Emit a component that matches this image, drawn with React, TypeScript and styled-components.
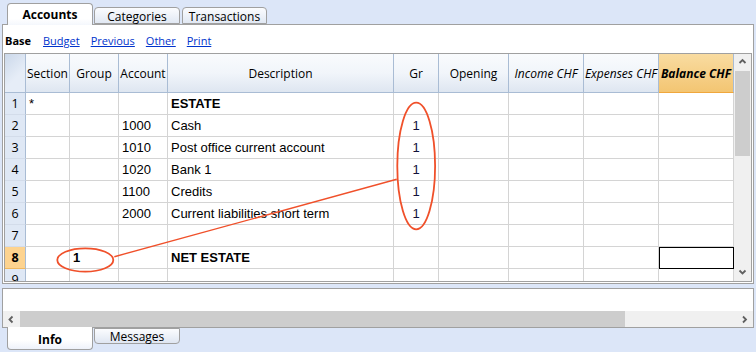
import React from 'react';
import styled, { createGlobalStyle } from 'styled-components';

const GlobalStyle = createGlobalStyle`
  html, body { margin: 0; padding: 0; }
  body { background: #dce6f8; }
`;

const UI_FONT = `'Open Sans', 'Noto Sans', sans-serif`;
const CELL_FONT = `'Liberation Sans', Arial, sans-serif`;

const COLS = [21, 44, 49, 49, 226, 45, 70, 75, 75, 75];
const TEMPLATE = COLS.map((c) => `${c}px`).join(' ');

const Page = styled.div`
  position: relative;
  width: 756px;
  height: 352px;
  overflow: hidden;
  background: #dce6f8;
  font-family: ${UI_FONT};
  color: #000;
`;

const TabRow = styled.div`
  display: flex;
  align-items: flex-end;
  height: 24px;
  padding-left: 7px;
  gap: 1px;
`;

const TopTab = styled.div<{ $active?: boolean; $width: number }>`
  position: relative;
  z-index: 2;
  box-sizing: border-box;
  width: ${({ $width }) => $width}px;
  height: ${({ $active }) => ($active ? 22 : 17)}px;
  margin-bottom: ${({ $active }) => ($active ? -1 : 0)}px;
  border: 1px solid #a0a0a0;
  border-bottom: ${({ $active }) => ($active ? 'none' : '1px solid #a0a0a0')};
  border-radius: 4px 4px 0 0;
  background: ${({ $active }) =>
    $active
      ? 'linear-gradient(#ffffff, #ffffff 70%, #f4f7fc)'
      : 'linear-gradient(#fbfcfe, #e1e8f3)'};
  display: flex;
  align-items: center;
  justify-content: center;
  font-size: 12px;
  font-weight: ${({ $active }) => ($active ? 700 : 400)};
  padding-top: ${({ $active }) => ($active ? 0 : 1)}px;
`;

const Panel = styled.div`
  position: relative;
  z-index: 1;
  box-sizing: border-box;
  margin-left: 2px;
  width: 752px;
  height: 260px;
  border: 1px solid #a0a0a0;
  background: #fff;
  padding: 0 1px 1px 1px;
  display: flex;
  flex-direction: column;
`;

const LinkBar = styled.div`
  height: 28px;
  box-sizing: border-box;
  padding: 3px 0 0 1px;
  display: flex;
  align-items: center;
  gap: 11px;
  font-size: 11px;
`;

const ViewName = styled.span`
  font-weight: 700;
  margin-right: 1px;
`;

const ViewLink = styled.a`
  color: #0033cc;
  text-decoration: underline;
  cursor: pointer;
`;

const GridBox = styled.div`
  flex: 1;
  min-height: 0;
  border: 1px solid #a0a0a0;
  display: flex;
  overflow: hidden;
`;

const Table = styled.div`
  width: 729px;
  overflow: hidden;
`;

const Row = styled.div<{ $header?: boolean }>`
  display: grid;
  grid-template-columns: ${TEMPLATE};
  height: ${({ $header }) => ($header ? 39 : 22)}px;
`;

const HeadCell = styled.div<{ $italic?: boolean; $hot?: boolean; $corner?: boolean }>`
  box-sizing: border-box;
  border-right: 1px solid #a9bcd4;
  border-bottom: 1px solid ${({ $hot }) => ($hot ? '#f0a73c' : '#a9bcd4')};
  background: ${({ $hot, $corner }) =>
    $hot
      ? 'linear-gradient(#f9dca1, #f3c572)'
      : $corner
      ? 'linear-gradient(135deg, #cbd8ea, #e6edf7 60%)'
      : 'linear-gradient(#f9fbfd, #f1f5fa 50%, #dee6f1)'};
  display: flex;
  align-items: center;
  justify-content: center;
  font-size: 12px;
  font-style: ${({ $italic, $hot }) => ($italic || $hot ? 'italic' : 'normal')};
  font-weight: ${({ $hot }) => ($hot ? 700 : 400)};
  white-space: nowrap;
  overflow: hidden;
`;

const NumCell = styled.div<{ $current?: boolean }>`
  box-sizing: border-box;
  border-right: 1px solid #a9bcd4;
  border-bottom: 1px solid ${({ $current }) => ($current ? '#f0b860' : '#d3dcea')};
  background: ${({ $current }) => ($current ? '#fdd38f' : '#dfe8f5')};
  display: flex;
  align-items: center;
  justify-content: center;
  font-size: 12.5px;
  font-weight: ${({ $current }) => ($current ? 700 : 400)};
`;

const Cell = styled.div<{ $bold?: boolean; $center?: boolean; $gr?: boolean; $selected?: boolean }>`
  box-sizing: border-box;
  border-right: 1px solid #d4d4d4;
  border-bottom: 1px solid #d4d4d4;
  padding: 0 3px;
  display: flex;
  align-items: center;
  justify-content: ${({ $center }) => ($center ? 'center' : 'flex-start')};
  font-family: ${CELL_FONT};
  font-size: 13px;
  font-weight: ${({ $bold }) => ($bold ? 700 : 400)};
  color: ${({ $gr }) => ($gr ? '#12123a' : '#000')};
  white-space: nowrap;
  overflow: hidden;
  outline: ${({ $selected }) => ($selected ? '1px solid #000' : 'none')};
  outline-offset: -1px;
`;

const VScroll = styled.div`
  width: 17px;
  background: #f0f0f0;
  display: flex;
  flex-direction: column;
`;

const ArrowButton = styled.div<{ $w?: number; $h?: number }>`
  width: ${({ $w }) => $w ?? 17}px;
  height: ${({ $h }) => $h ?? 17}px;
  flex-shrink: 0;
  display: flex;
  align-items: center;
  justify-content: center;
  background: #f0f0f0;
`;

const VThumb = styled.div`
  height: 85px;
  margin: 0 1px;
  background: #cdcdcd;
`;

const Spacer = styled.div`
  flex: 1;
`;

const InfoPanel = styled.div`
  position: relative;
  z-index: 1;
  box-sizing: border-box;
  margin: 4px 0 0 2px;
  width: 752px;
  height: 40px;
  border: 1px solid #a0a0a0;
  background: #fff;
  display: flex;
  flex-direction: column;
  justify-content: flex-end;
`;

const HScroll = styled.div`
  height: 16px;
  display: flex;
  background: #f0f0f0;
`;

const HThumb = styled.div`
  width: 605px;
  background: #cdcdcd;
`;

const BottomTabRow = styled.div`
  display: flex;
  align-items: flex-start;
  padding-left: 7px;
  gap: 1px;
`;

const BottomTab = styled.div<{ $active?: boolean; $width: number }>`
  position: relative;
  z-index: 2;
  box-sizing: border-box;
  width: ${({ $width }) => $width}px;
  height: ${({ $active }) => ($active ? 23 : 16)}px;
  margin-top: ${({ $active }) => ($active ? -1 : 0)}px;
  border: 1px solid #a0a0a0;
  border-top: ${({ $active }) => ($active ? 'none' : '1px solid #a0a0a0')};
  border-radius: 0 0 4px 4px;
  background: ${({ $active }) =>
    $active ? 'linear-gradient(#ffffff, #ffffff 60%, #eef2fa)' : 'linear-gradient(#fbfcfe, #dfe6f2)'};
  display: flex;
  align-items: center;
  justify-content: center;
  font-size: 12px;
  font-weight: ${({ $active }) => ($active ? 700 : 400)};
  padding-top: ${({ $active }) => ($active ? 2 : 0)}px;
`;

const Overlay = styled.svg`
  position: absolute;
  left: 0;
  top: 0;
  z-index: 5;
  pointer-events: none;
`;

const Chevron = ({ dir }: { dir: 'up' | 'down' | 'left' | 'right' }) => {
  const paths = {
    up: 'M1.5 5 L4.5 2 L7.5 5',
    down: 'M1.5 2.5 L4.5 5.5 L7.5 2.5',
    left: 'M5.5 1.5 L2.5 4.5 L5.5 7.5',
    right: 'M3 1.5 L6 4.5 L3 7.5',
  };
  return (
    <svg width="9" height="9" viewBox="0 0 9 9">
      <path d={paths[dir]} fill="none" stroke="#606060" strokeWidth="1.8" />
    </svg>
  );
};

interface AccountRow {
  n: number;
  section?: string;
  group?: string;
  account?: string;
  desc?: string;
  gr?: string;
  bold?: boolean;
  current?: boolean;
}

const rows: AccountRow[] = [
  { n: 1, section: '*', desc: 'ESTATE', bold: true },
  { n: 2, account: '1000', desc: 'Cash', gr: '1' },
  { n: 3, account: '1010', desc: 'Post office current account', gr: '1' },
  { n: 4, account: '1020', desc: 'Bank 1', gr: '1' },
  { n: 5, account: '1100', desc: 'Credits', gr: '1' },
  { n: 6, account: '2000', desc: 'Current liabilities short term', gr: '1' },
  { n: 7 },
  { n: 8, group: '1', desc: 'NET ESTATE', bold: true, current: true },
  { n: 9 },
];

const headers = [
  { label: 'Section' },
  { label: 'Group' },
  { label: 'Account' },
  { label: 'Description' },
  { label: 'Gr' },
  { label: 'Opening' },
  { label: 'Income CHF', italic: true },
  { label: 'Expenses CHF', italic: true },
  { label: 'Balance CHF', hot: true },
];

const App: React.FC = () => {
  return (
    <Page>
      <GlobalStyle />
      <TabRow>
        <TopTab $active $width={86}>Accounts</TopTab>
        <TopTab $width={86}>Categories</TopTab>
        <TopTab $width={85} style={{ marginLeft: 1 }}>Transactions</TopTab>
      </TabRow>

      <Panel>
        <LinkBar>
          <ViewName>Base</ViewName>
          <ViewLink>Budget</ViewLink>
          <ViewLink>Previous</ViewLink>
          <ViewLink>Other</ViewLink>
          <ViewLink>Print</ViewLink>
        </LinkBar>

        <GridBox>
          <Table>
            <Row $header>
              <HeadCell $corner />
              {headers.map((h) => (
                <HeadCell key={h.label} $italic={h.italic} $hot={h.hot}>
                  {h.label}
                </HeadCell>
              ))}
            </Row>
            {rows.map((r) => (
              <Row key={r.n}>
                <NumCell $current={r.current}>{r.n}</NumCell>
                <Cell>{r.section}</Cell>
                <Cell $bold>{r.group}</Cell>
                <Cell>{r.account}</Cell>
                <Cell $bold={r.bold}>{r.desc}</Cell>
                <Cell $center $gr>{r.gr}</Cell>
                <Cell />
                <Cell />
                <Cell />
                <Cell $selected={r.current} />
              </Row>
            ))}
          </Table>
          <VScroll>
            <ArrowButton>
              <Chevron dir="up" />
            </ArrowButton>
            <VThumb />
            <Spacer />
            <ArrowButton>
              <Chevron dir="down" />
            </ArrowButton>
          </VScroll>
        </GridBox>
      </Panel>

      <InfoPanel>
        <HScroll>
          <ArrowButton $h={16}>
            <Chevron dir="left" />
          </ArrowButton>
          <HThumb />
          <Spacer />
          <ArrowButton $h={16}>
            <Chevron dir="right" />
          </ArrowButton>
        </HScroll>
      </InfoPanel>

      <BottomTabRow>
        <BottomTab $active $width={86}>Info</BottomTab>
        <BottomTab $width={86}>Messages</BottomTab>
      </BottomTabRow>

      <Overlay width="756" height="352" viewBox="0 0 756 352">
        <g fill="none" stroke="#f0502a" strokeWidth="1.8">
          <ellipse cx="416.2" cy="166" rx="18.9" ry="63.3" />
          <ellipse cx="85.3" cy="260" rx="28" ry="11.7" />
          <line x1="114.3" y1="256.7" x2="396.7" y2="179.3" strokeWidth="1.4" />
        </g>
      </Overlay>
    </Page>
  );
};

export default App;
